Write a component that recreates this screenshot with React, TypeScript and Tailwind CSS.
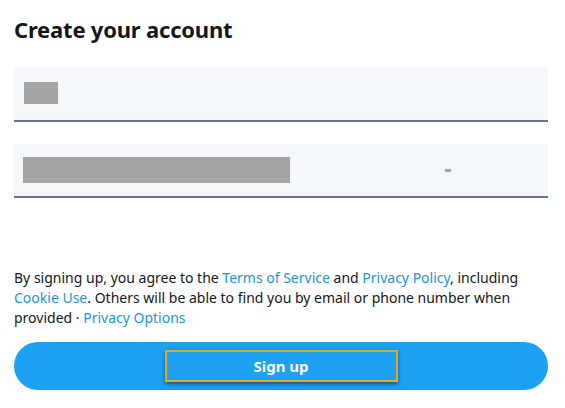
import React from 'react';

const font = { fontFamily: '"Noto Sans", "Open Sans", sans-serif' };

const App: React.FC = () => {
  return (
    <div className="w-[565px] h-[408px] bg-white px-[14px] pt-[14px] text-[#14171a]" style={font}>
      <h1 className="text-[22px] font-bold leading-[30px] tracking-[-0.2px]">Create your account</h1>

      {/* Name */}
      <div className="mt-[22px] h-[56px] bg-[#f5f8fa] border-b-2 border-[#657786] flex items-center pl-[10px] w-[534px]">
        <div className="w-[34px] h-[22px] bg-[#a4a4a4]" />
      </div>

      {/* Phone / email */}
      <div className="mt-[22px] h-[54px] bg-[#f5f8fa] border-b-2 border-[#657786] flex items-center pl-[9px] w-[534px]">
        <div className="w-[267px] h-[26px] bg-[#a4a4a4]" />
        <div className="ml-[155px] w-[6px] h-[3px] bg-[#a4a4a4]" />
      </div>

      <p className="mt-[70px] text-[14px] leading-[20px] text-[#14171a]">
        By signing up, you agree to the <span className="text-[#1b95e0]">Terms of Service</span> and{' '}
        <span className="text-[#1b95e0]">Privacy Policy</span>, including{' '}
        <span className="text-[#1b95e0]">Cookie Use</span>. Others will be able to find you by email or phone number
        when provided · <span className="text-[#1b95e0]">Privacy Options</span>
      </p>

      <button className="mt-[14px] w-[534px] h-[48px] rounded-full bg-[#1da1f2] flex items-center justify-center">
        <span className="w-[233px] h-[32px] border-2 border-[#e5a823] shadow-[0_2px_4px_rgba(0,0,0,0.45)] flex items-center justify-center text-white text-[15px] font-bold">
          Sign up
        </span>
      </button>
    </div>
  );
};

export default App;
